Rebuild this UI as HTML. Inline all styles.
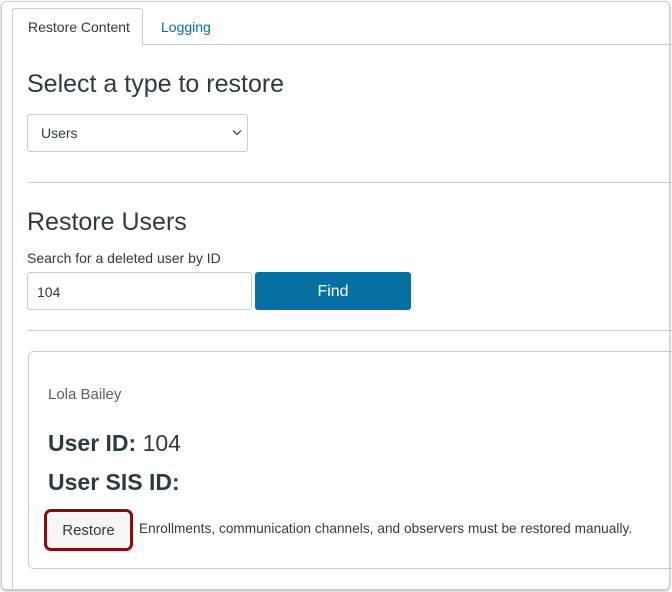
<!DOCTYPE html>
<html><head><style>
*{margin:0;padding:0;box-sizing:border-box}
body{width:672px;height:592px;background:#fff;font-family:"Liberation Sans",sans-serif;color:#2d3b45;position:relative;overflow:hidden}
.a{position:absolute}
</style></head><body>
<div class="a" style="left:1px;top:1px;width:669px;height:589px;border:1px solid #c7cdd1;border-radius:5px;box-shadow:0 1px 2px rgba(0,0,0,.35)"></div>
<div class="a" style="left:12px;top:44px;width:1px;height:546px;background:#c7cdd1"></div>
<div class="a" style="left:12px;top:44px;width:660px;height:1px;background:#c7cdd1"></div>
<div class="a" style="left:12px;top:8px;width:131px;height:37px;border:1px solid #c7cdd1;border-bottom:none;border-radius:3px 3px 0 0;background:#fff"></div>
<div class="a" style="left:28px;top:19px;font-size:14px;color:#2d3b45">Restore Content</div>
<div class="a" style="left:161px;top:19px;font-size:14px;color:#0770a3">Logging</div>
<div class="a" style="left:27px;top:70px;font-size:25px">Select a type to restore</div>
<div class="a" style="left:27px;top:114px;width:221px;height:38px;border:1px solid #c7cdd1;border-radius:3px"></div>
<div class="a" style="left:41px;top:125px;font-size:14px">Users</div>
<svg class="a" style="left:232px;top:129px" width="10" height="7"><path d="M1 1.5L5 5.5L9 1.5" stroke="#2d3b45" stroke-width="1.2" fill="none"/></svg>
<div class="a" style="left:27px;top:182px;width:645px;height:1px;background:#c7cdd1"></div>
<div class="a" style="left:27px;top:208px;font-size:25px">Restore Users</div>
<div class="a" style="left:27px;top:250px;font-size:14px">Search for a deleted user by ID</div>
<div class="a" style="left:27px;top:272px;width:225px;height:38px;border:1px solid #c7cdd1;border-radius:3px"></div>
<div class="a" style="left:37px;top:284px;font-size:14px">104</div>
<div class="a" style="left:255px;top:272px;width:156px;height:38px;background:#0770a3;border-radius:3px;color:#fff;font-size:16px;text-align:center;line-height:40px">Find</div>
<div class="a" style="left:27px;top:330px;width:645px;height:1px;background:#c7cdd1"></div>
<div class="a" style="left:28px;top:351px;width:660px;height:218px;border:1px solid #c7cdd1;border-radius:5px"></div>
<div class="a" style="left:48px;top:386px;font-size:15px;color:#56636d">Lola Bailey</div>
<div class="a" style="left:48px;top:430px;font-size:23px"><b>User ID:</b> 104</div>
<div class="a" style="left:48px;top:469px;font-size:23px"><b>User SIS ID:</b></div>
<div class="a" style="left:44px;top:509px;width:89px;height:42px;border:3px solid #8b0a0a;border-radius:7px;background:#f5f5f5"></div>
<div class="a" style="left:44px;top:510px;width:89px;height:42px;font-size:15px;text-align:center;line-height:42px">Restore</div>
<div class="a" style="left:139px;top:521px;font-size:13.6px;letter-spacing:0.05px">Enrollments, communication channels, and observers must be restored manually.</div>
</body></html>
